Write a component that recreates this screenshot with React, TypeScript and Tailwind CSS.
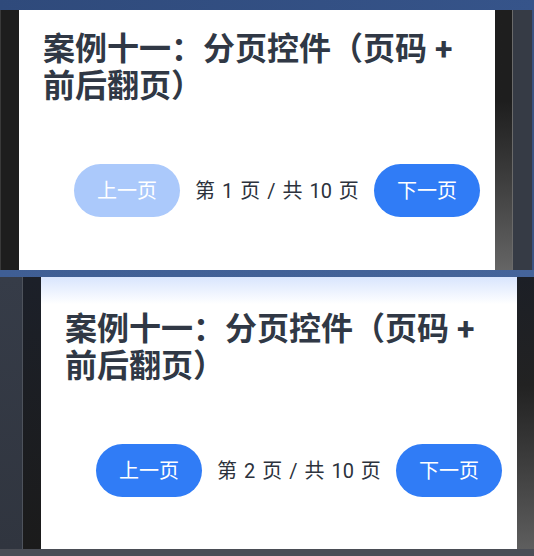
import React from "react";

const FONT = { fontFamily: 'Roboto, "Noto Sans CJK SC", "Noto Sans", sans-serif' };

function Card({ page, topPad, gradient }: { page: number; topPad: string; gradient?: boolean }) {
  const prevDisabled = page <= 1;
  return (
    <div
      className={`w-[476px] h-full flex flex-col ${gradient ? "bg-gradient-to-b from-[#d9e5fd] via-white via-[10%] to-white" : "bg-white"} ${topPad}`}
      style={FONT}
    >
      <h1 className="pl-[24px] pr-[24px] text-[32px] leading-[37px] font-bold text-[#303845]">
        案例十一：分页控件（页码 + 前后翻页）
      </h1>
      <div className="mt-[59px] ml-[55px] w-[406px] flex items-center">
        <button
          className={`w-[106px] h-[53px] rounded-full text-[20px] text-white flex items-center justify-center ${
            prevDisabled ? "bg-[#abc9fb]" : "bg-[#307cf6]"
          }`}
        >
          上一页
        </button>
        <div className="flex-1 text-center text-[20px] text-[#2c323c] [word-spacing:2px]">第 {page} 页 / 共 10 页</div>
        <button className="w-[106px] h-[53px] rounded-full text-[20px] text-white bg-[#307cf6] flex items-center justify-center">
          下一页
        </button>
      </div>
    </div>
  );
}

export default function App() {
  return (
    <div className="w-[534px] h-[556px] flex flex-col bg-[#4a4d55] overflow-hidden">
      <div className="h-[10px] shrink-0 bg-gradient-to-r from-[#2f4a7b] to-[#36548a]" />
      <div className="h-[260px] shrink-0 flex">
        <div className="w-[19px] bg-[#1e1e1e] border-l border-[#3a3a3a]" />
        <Card page={1} topPad="pt-[21px]" />
        <div className="w-[17px] bg-gradient-to-b from-[#1e1e1e] via-[#1e1e1e] via-[35%] to-[#656565]" />
        <div className="w-px bg-[#6a6a6a]" />
        <div className="w-[19px] bg-[#363b45]" />
        <div className="w-[2px] bg-[#3a5382]" />
      </div>
      <div className="h-[7px] shrink-0 bg-gradient-to-r from-[#3f5e94] to-[#45649a]" />
      <div className="h-[272px] shrink-0 flex">
        <div className="w-[22px] bg-gradient-to-b from-[#363c48] to-[#30353f]" />
        <div className="w-px bg-[#4e535c]" />
        <div className="w-[18px] bg-gradient-to-b from-[#1c2029] to-[#1b1b1b]" />
        <Card page={2} topPad="pt-[34px]" gradient />
        <div className="flex-1 bg-gradient-to-b from-[#1c1f26] via-[#222] via-[40%] to-[#5e5e5e]" />
      </div>
      <div className="flex-1 bg-[#4a4d55]" />
    </div>
  );
}
